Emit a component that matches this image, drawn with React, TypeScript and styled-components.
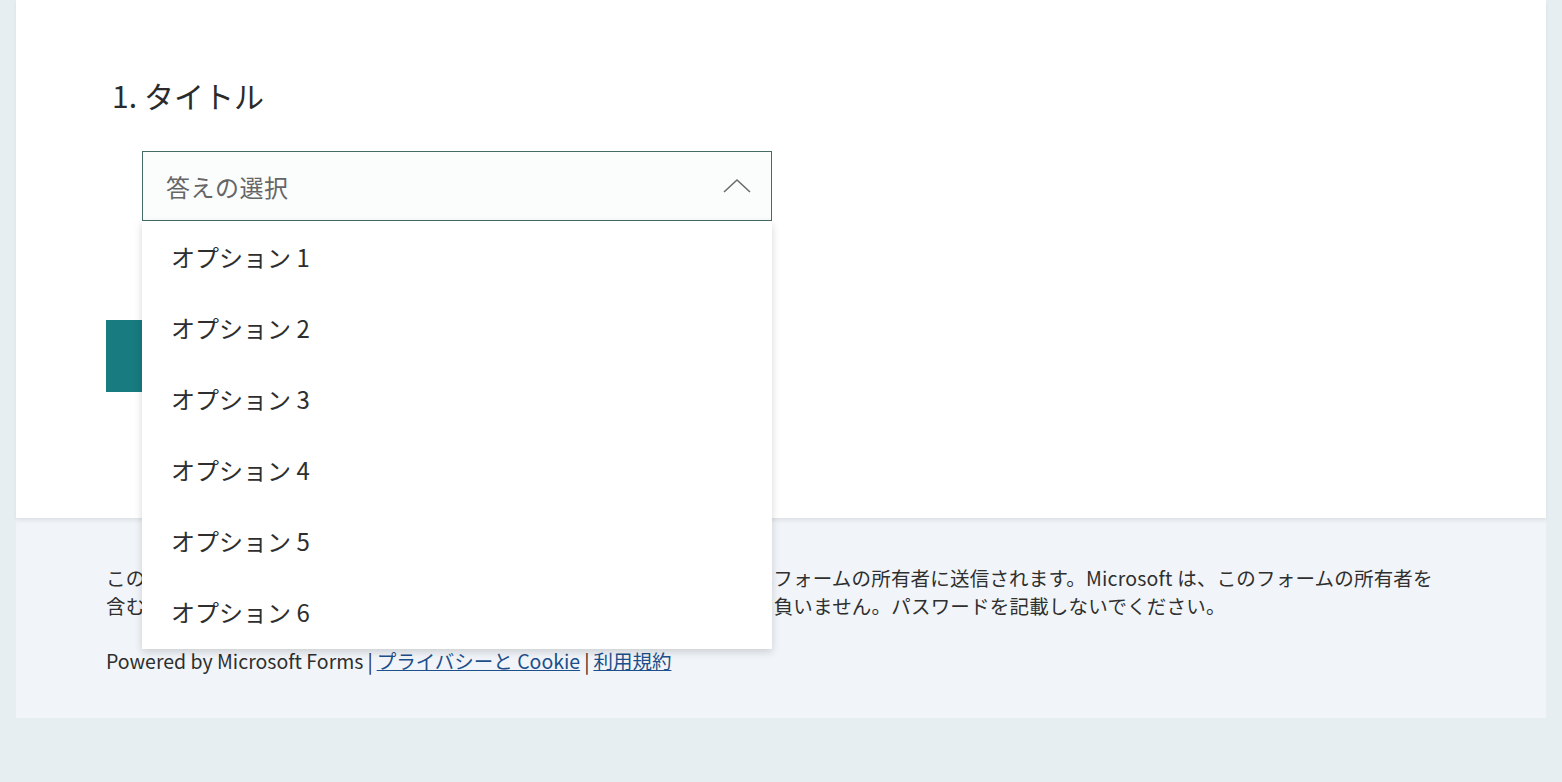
import React from "react";
import styled, { createGlobalStyle } from "styled-components";

const Global = createGlobalStyle`
  html, body { margin: 0; padding: 0; }
  body {
    background: #e7eef1;
    font-family: "Noto Sans CJK JP", "Noto Sans", sans-serif;
    color: #333;
  }
`;

const Page = styled.div`
  padding: 0 16px;
  min-height: 782px;
  box-sizing: border-box;
`;

const Card = styled.section`
  position: relative;
  z-index: 2;
  background: #ffffff;
  padding: 73px 90px 126px;
  box-shadow: 0 2px 4px rgba(0, 0, 0, 0.06);
`;

const Title = styled.h2`
  margin: 0 0 34px;
  padding-left: 6px;
  font-size: 30px;
  line-height: 44px;
  font-weight: 400;
  color: #2b2b2b;
  display: flex;
  gap: 7px;
`;

const SelectWrap = styled.div`
  position: relative;
  margin-left: 36px;
  width: 630px;
`;

const SelectBox = styled.div`
  height: 70px;
  box-sizing: border-box;
  border: 1px solid #456c67;
  background: #fbfdfd;
  display: flex;
  align-items: center;
  justify-content: space-between;
  padding: 0 20px 0 23px;
`;

const Placeholder = styled.span`
  font-size: 24px;
  color: #666;
  letter-spacing: 0.5px;
`;

const Menu = styled.ul`
  position: absolute;
  top: 100%;
  left: 0;
  width: 100%;
  margin: 0;
  padding: 0 0 2px;
  list-style: none;
  background: #fff;
  box-shadow: 0 3px 8px rgba(0, 0, 0, 0.16);
  z-index: 10;
`;

const Option = styled.li`
  height: 71px;
  display: flex;
  align-items: center;
  padding-left: 29px;
  font-size: 24px;
  color: #2e2e2e;
`;

const Submit = styled.button`
  margin-top: 99px;
  width: 116px;
  height: 72px;
  border: none;
  background: #177b7f;
  color: #fff;
  font-family: inherit;
  font-size: 20px;
`;

const Footer = styled.footer`
  background: #f1f5f9;
  padding: 46px 90px 43px;
  box-shadow: inset 0 6px 8px -6px rgba(0, 0, 0, 0.06);
`;

const Notice = styled.p`
  margin: 0;
  font-size: 19.5px;
  line-height: 28px;
  color: #2f2f2f;
  letter-spacing: 0.2px;
  white-space: nowrap;
`;

const Links = styled.div`
  margin-top: 27px;
  font-size: 19.5px;
  line-height: 28px;
  color: #2f2f2f;
`;

const Link = styled.a`
  color: #1d4f8a;
  text-decoration: underline;
`;

const Sep = styled.span`
  margin: 0 4px;
`;

function Chevron() {
  return (
    <svg width="28" height="16" viewBox="0 0 28 16" fill="none">
      <path d="M1 14 L14 2 L27 14" stroke="#6b6b6b" strokeWidth="1.6" />
    </svg>
  );
}

const options = ["オプション 1", "オプション 2", "オプション 3", "オプション 4", "オプション 5", "オプション 6"];

export default function App() {
  return (
    <>
      <Global />
      <Page>
        <Card>
          <Title>
            <span>1.</span>
            <span>タイトル</span>
          </Title>
          <SelectWrap>
            <SelectBox>
              <Placeholder>答えの選択</Placeholder>
              <Chevron />
            </SelectBox>
            <Menu>
              {options.map((o) => (
                <Option key={o}>{o}</Option>
              ))}
            </Menu>
          </SelectWrap>
          <Submit>送信</Submit>
        </Card>
        <Footer>
          <Notice>
            このコンテンツはフォームの所有者が作成したものです。送信したデータはフォームの所有者に送信されます。Microsoft は、このフォームの所有者を
            <br />
            含むお客様のプライバシーやセキュリティの取り扱いについて一切の責任を負いません。パスワードを記載しないでください。
          </Notice>
          <Links>
            Powered by Microsoft Forms<Sep>|</Sep>
            <Link href="#">プライバシーと Cookie</Link>
            <Sep>|</Sep>
            <Link href="#">利用規約</Link>
          </Links>
        </Footer>
      </Page>
    </>
  );
}
